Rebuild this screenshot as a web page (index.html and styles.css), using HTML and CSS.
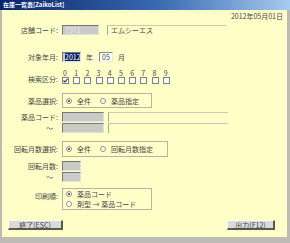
FILE: index.html
```html
<!DOCTYPE html>
<html lang="ja">
<head>
    <meta charset="UTF-8">
    <title>在庫一覧表</title>
    <link rel="stylesheet" href="styles.css">
</head>
<body>
    <div class="window">
        <div class="titlebar">在庫一覧表[ZaikoList]</div>
        <div class="client">
            <div class="date">2012年05月01日</div>

            <div class="row store">
                <span class="lbl">店舗コード:</span>
                <span class="box gray w37 dim">7371</span>
                <span class="box name ml8">エムシーエス</span>
            </div>

            <div class="row ym">
                <span class="lbl">対象年月:</span>
                <span class="box gray w19"><span class="sel">2012</span></span>
                <span class="unit">年</span>
                <span class="box white w14">05</span>
                <span class="unit">月</span>
            </div>

            <div class="row kubun">
                <span class="lbl">検索区分:</span>
                <div class="checks">
                    <span class="num">0</span><span class="num">1</span><span class="num">2</span><span class="num">3</span><span class="num">4</span>
                    <span class="num">5</span><span class="num">6</span><span class="num">7</span><span class="num">8</span><span class="num">9</span>
                    <span class="cb on"><svg width="5" height="5" viewBox="0 0 5 5"><path d="M0.5 2.5 L2 4 L4.5 0.8" fill="none" stroke="#333" stroke-width="1.1"/></svg></span>
                    <span class="cb"></span><span class="cb"></span><span class="cb"></span><span class="cb"></span>
                    <span class="cb"></span><span class="cb"></span><span class="cb"></span><span class="cb"></span><span class="cb"></span>
                </div>
            </div>

            <div class="row select">
                <span class="lbl">薬品選択:</span>
                <div class="group w90">
                    <span class="radio on"></span><span class="rtext">全件</span>
                    <span class="radio"></span><span class="rtext">薬品指定</span>
                </div>
            </div>

            <div class="row code">
                <span class="lbl">薬品コード:</span>
                <span class="box gray w42"></span>
                <span class="box name ml4"></span>
            </div>
            <div class="row code tilde">
                <span class="lbl">～</span>
                <span class="box gray w42"></span>
                <span class="box name ml4"></span>
            </div>

            <div class="row select rot">
                <span class="lbl">回転月数選択:</span>
                <div class="group w106">
                    <span class="radio on"></span><span class="rtext">全件</span>
                    <span class="radio"></span><span class="rtext">回転月数指定</span>
                </div>
            </div>

            <div class="row code rotnum">
                <span class="lbl">回転月数:</span>
                <span class="box gray w19"></span>
            </div>
            <div class="row code tilde">
                <span class="lbl">～</span>
                <span class="box gray w19"></span>
            </div>

            <div class="row print">
                <span class="lbl">印刷順:</span>
                <div class="group w90 stack">
                    <div class="opt"><span class="radio on"></span><span class="rtext">薬品コード</span></div>
                    <div class="opt"><span class="radio"></span><span class="rtext">剤型 → 薬品コード</span></div>
                </div>
            </div>

            <div class="buttons">
                <button type="button" class="btn exit">終了(ESC)</button>
                <button type="button" class="btn out">出力(F12)</button>
            </div>
        </div>
    </div>
</body>
</html>
```

FILE: styles.css
```css
body {
    margin: 0;
    font-family: "Noto Sans CJK JP", sans-serif;
    font-size: 7px;
    color: #484848;
}

.window {
    width: 290px;
    height: 243px;
    box-sizing: border-box;
    background-color: #bcbab4;
    display: flex;
    flex-direction: column;
}

.titlebar {
    height: 10px;
    line-height: 10px;
    padding-left: 3px;
    font-size: 6px;
    font-weight: bold;
    color: #fff;
    background: linear-gradient(to right, #0a246a, #3a6ab0 55%, #a6caf0);
}

.client {
    flex: 1;
    margin: 0 3px 6px 2px;
    background-color: #ffffc8;
    display: flex;
    flex-direction: column;
}

.date {
    margin-top: 2px;
    height: 8px;
    line-height: 8px;
    text-align: right;
    padding-right: 4px;
}

.row {
    display: flex;
    align-items: center;
    height: 10px;
}

.lbl {
    width: 56px;
    flex-shrink: 0;
    text-align: right;
    margin-right: 4px;
    white-space: nowrap;
}

.store { margin-top: 5px; }
.ym { margin-top: 17px; }
.kubun { margin-top: 7px; height: 15px; align-items: flex-end; }
.select { margin-top: 9px; height: 15px; }
.code { margin-top: 4px; }
.tilde { margin-top: 1px; }
.tilde .lbl { padding-right: 5px; width: 51px; }
.rot { margin-top: 8px; height: 16px; }
.print { margin-top: 6px; height: 22px; align-items: flex-start; }
.print .lbl { margin-top: 3px; }

.box {
    height: 10px;
    box-sizing: border-box;
    line-height: 9px;
    padding-left: 2px;
    white-space: nowrap;
    overflow: hidden;
}

.gray {
    background-color: #cacac6;
    border-top: 1px solid #787878;
    border-left: 1px solid #787878;
    border-right: 1px solid #e0e0dc;
    border-bottom: 1px solid #e0e0dc;
}

.white {
    background-color: #fff;
    border-top: 1px solid #888;
    border-left: 1px solid #888;
    border-right: 1px solid #e8e8e8;
    border-bottom: 1px solid #e8e8e8;
}

.name {
    width: 120px;
    border-top: 1px solid #cacab0;
    border-left: 1px solid #a8a898;
    padding-left: 3px;
}

.dim { color: #e8e8e8; }
.sel { background-color: #0a246a; color: #fff; }

.w14 { width: 14px; }
.w19 { width: 19px; }
.w37 { width: 37px; }
.w42 { width: 42px; }
.ml4 { margin-left: 4px; }
.ml8 { margin-left: 8px; }

.unit { margin: 0 6px 0 5px; }

.checks {
    display: grid;
    grid-template-columns: repeat(10, 11.2px);
    grid-template-rows: 8px 7px;
}

.num {
    line-height: 8px;
    padding-left: 1px;
}

.cb {
    width: 7px;
    height: 7px;
    box-sizing: border-box;
    background-color: #fff;
    border: 1px solid #808080;
    display: flex;
    align-items: center;
    justify-content: center;
}

.group {
    height: 100%;
    box-sizing: border-box;
    border: 1px solid #b4b4a0;
    display: flex;
    align-items: center;
    padding-left: 3px;
}

.w90 { width: 90px; }
.w106 { width: 106px; }

.stack {
    flex-direction: column;
    align-items: flex-start;
    justify-content: center;
    gap: 2px;
}

.opt {
    display: flex;
    align-items: center;
    height: 8px;
}

.radio {
    width: 6px;
    height: 6px;
    box-sizing: border-box;
    border-radius: 50%;
    border: 1px solid #909090;
    background-color: #fff;
    margin-right: 5px;
    display: flex;
    align-items: center;
    justify-content: center;
}

.radio.on::after {
    content: "";
    width: 2px;
    height: 2px;
    border-radius: 50%;
    background-color: #333;
}

.rtext { margin-right: 9px; }

.buttons {
    margin-top: 10px;
    display: flex;
    justify-content: space-between;
    padding: 0 12px 0 6px;
}

.btn {
    height: 10px;
    padding: 0;
    font-family: inherit;
    font-size: 7px;
    line-height: 8px;
    color: #484848;
    background-color: #dadad6;
    border-top: 1px solid #fff;
    border-left: 1px solid #fff;
    border-right: 2px solid #585858;
    border-bottom: 2px solid #585858;
}

.exit { width: 55px; }
.out { width: 48px; }
```
